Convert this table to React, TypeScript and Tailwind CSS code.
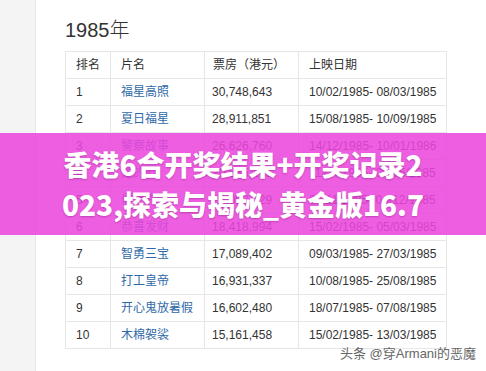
const rows = [
  { rank: "1", title: "福星高照", box: "30,748,643", date: "10/02/1985- 08/03/1985" },
  { rank: "2", title: "夏日福星", box: "28,911,851", date: "15/08/1985- 10/09/1985" },
  { rank: "3", title: "警察故事", box: "26,626,760", date: "14/12/1985- 10/01/1986" },
  { rank: "4", title: "龙的心", box: "20,535,275", date: "11/04/1985- 08/05/1985" },
  { rank: "5", title: "僵尸先生", box: "20,092,129", date: "07/11/1985- 04/12/1985" },
  { rank: "6", title: "恭喜发财", box: "18,418,994", date: "15/02/1985- 05/03/1985" },
  { rank: "7", title: "智勇三宝", box: "17,089,402", date: "09/03/1985- 27/03/1985" },
  { rank: "8", title: "打工皇帝", box: "16,931,337", date: "10/08/1985- 25/08/1985" },
  { rank: "9", title: "开心鬼放暑假", box: "16,602,480", date: "18/07/1985- 07/08/1985" },
  { rank: "10", title: "木棉袈裟", box: "15,161,458", date: "15/02/1985- 13/03/1985" },
];

const cell = "border border-[#e6e6e6] px-[10px] whitespace-nowrap overflow-hidden";

export default function App() {
  return (
    <div className="relative flex h-[371px] w-[486px] overflow-hidden bg-white font-['Liberation_Sans','Noto_Sans_CJK_SC',sans-serif]">
      {/* side rail */}
      <div className="h-full w-[36px] shrink-0 border-r border-[#e6e6e6] bg-[#f4f4f4]" />

      <div className="flex-1 pl-[29px] pt-[18px]">
        <h2 className="text-[20px] font-light leading-[24px] text-[#333]">1985年</h2>

        <table className="mt-[9px] w-[381px] table-fixed border-collapse text-[12px] text-[#333]">
          <colgroup>
            <col className="w-[45px]" />
            <col className="w-[94px]" />
            <col className="w-[94px]" />
            <col className="w-[148px]" />
          </colgroup>
          <thead>
            <tr className="h-[27px]">
              <th className={`${cell} text-left font-normal`}>排名</th>
              <th className={`${cell} text-left font-normal`}>片名</th>
              <th className={`${cell} text-left font-normal !px-[8px]`}>票房（港元）</th>
              <th className={`${cell} text-left font-normal`}>上映日期</th>
            </tr>
          </thead>
          <tbody>
            {rows.map((r) => (
              <tr key={r.rank} className="h-[27px]">
                <td className={cell}>{r.rank}</td>
                <td className={`${cell} text-[#2f6aa8]`}>{r.title}</td>
                <td className={`${cell} !px-[7px]`}>{r.box}</td>
                <td className={cell}>{r.date}</td>
              </tr>
            ))}
          </tbody>
        </table>
      </div>

      {/* headline banner */}
      <div className="absolute left-0 right-0 top-[133px] flex h-[102px] flex-col items-center justify-center bg-[rgba(235,70,220,0.87)] font-['Noto_Sans_CJK_SC',sans-serif] text-[28px] font-black leading-[40px] text-white [text-shadow:0_1px_2px_rgba(80,0,70,0.3)]">
        <div className="whitespace-nowrap">香港6合开奖结果+开奖记录2</div>
        <div className="whitespace-nowrap">023,探索与揭秘_黄金版16.7</div>
      </div>

      {/* source mark */}
      <div className="absolute right-[10px] top-[346px] text-[13px] leading-[16px] text-[#666] [text-shadow:0_0_2px_#fff]">
        头条 @穿Armani的恶魔
      </div>
    </div>
  );
}
